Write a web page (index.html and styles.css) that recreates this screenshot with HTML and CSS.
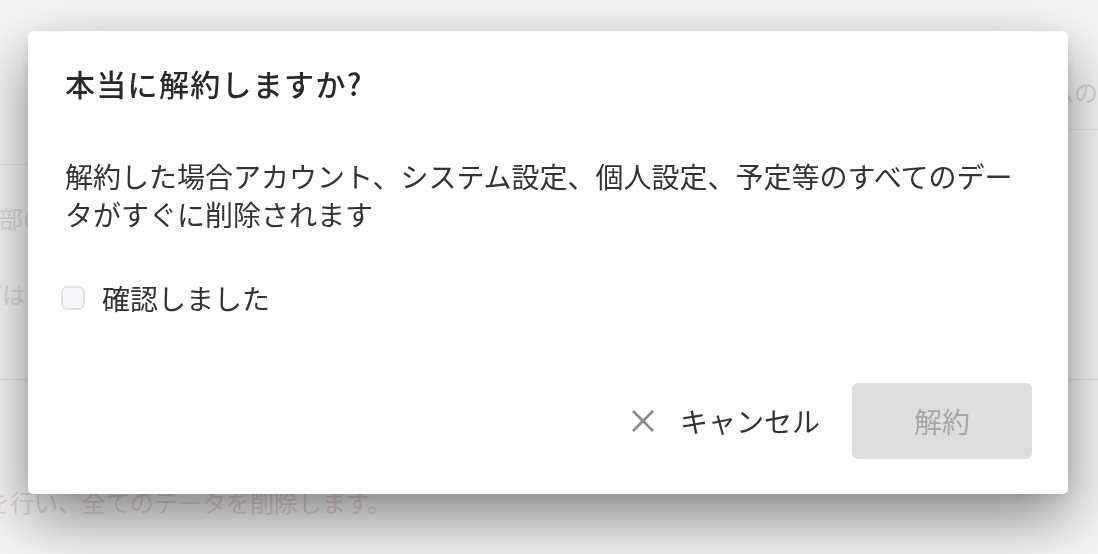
FILE: index.html
```html
<!DOCTYPE html>
<html lang="ja">
<head>
<meta charset="utf-8">
<title>解約</title>
<link rel="stylesheet" href="styles.css">
</head>
<body>
  <div class="bg-page">
    <div class="bg-top">
      <div class="bg-top-right"><span class="bg-text bg-tr">システムの</span></div>
    </div>
    <div class="bg-section">
      <p class="bg-text bg-l1">全部の</p>
      <p class="bg-text bg-l2">ればはい</p>
    </div>
    <div class="bg-danger">
      <p class="bg-text bg-l3">を行い、全てのデータを削除します。</p>
    </div>
  </div>

  <div class="overlay">
    <div class="modal" role="dialog">
      <h2 class="modal-title">本当に解約しますか?</h2>
      <p class="modal-body">解約した場合アカウント、システム設定、個人設定、予定等のすべてのデータがすぐに削除されます</p>
      <label class="check-row">
        <span class="check-box"></span>
        <span class="check-label">確認しました</span>
      </label>
      <div class="modal-footer">
        <button class="btn-cancel" type="button">
          <svg class="icon-x" width="24" height="24" viewBox="0 0 24 24" aria-hidden="true">
            <path d="M2 2 L22 22 M22 2 L2 22" stroke="#8a8a8e" stroke-width="2.6" stroke-linecap="butt" fill="none"/>
          </svg>
          <span>キャンセル</span>
        </button>
        <button class="btn-confirm" type="button" disabled>解約</button>
      </div>
    </div>
  </div>
</body>
</html>
```

FILE: styles.css
```css
html, body {
  margin: 0;
  padding: 0;
  height: 100%;
  overflow: hidden;
}

body {
  background: #f5f5f5;
  font-family: "Noto Sans CJK JP", "Noto Sans", sans-serif;
  color: #333;
}

/* faint page behind the overlay */
.bg-page {
  width: 100%;
  height: 100%;
  overflow: hidden;
}

.bg-text {
  margin: 0;
  font-size: 24px;
  line-height: 34px;
  color: #dcd6d8;
  white-space: nowrap;
}

.bg-top {
  height: 130px;
  display: flex;
  justify-content: flex-end;
  align-items: flex-end;
}

.bg-top-right {
  width: 420px;
  height: 54px;
  border-bottom: 1px solid #e2e2e2;
  display: flex;
  justify-content: flex-end;
  overflow: hidden;
}

.bg-tr {
  margin-right: 0;
  margin-top: 0;
  color: #d6d6d6;
}

.bg-section {
  margin-top: 34px;
  width: 420px;
  border-top: 1px solid #e4e4e4;
  height: 215px;
  padding-top: 36px;
  box-sizing: border-box;
}

.bg-l1 {
  margin-left: -25px;
  color: #dcd8de;
}

.bg-l2 {
  margin-left: -46px;
  margin-top: 42px;
  color: #dcd8de;
}

.bg-danger {
  border-top: 1px solid #ecd9dd;
  padding-top: 105px;
}

.bg-l3 {
  margin-left: -14px;
  color: #e3d3d7;
}

/* overlay + modal */
.overlay {
  position: fixed;
  inset: 0;
  display: flex;
  justify-content: center;
  align-items: flex-start;
  padding: 31px 2px 0 0;
}

.modal {
  width: 1040px;
  box-sizing: border-box;
  background: #fff;
  border-radius: 5px;
  padding: 31px 37px 35px 37px;
  box-shadow: 0 24px 60px rgba(0, 0, 0, 0.45), 0 4px 12px rgba(0, 0, 0, 0.08);
}

.modal-title {
  margin: 0;
  font-size: 30px;
  line-height: 42px;
  font-weight: 500;
  letter-spacing: 1.3px;
  color: #2a2a2a;
}

.modal-body {
  margin: 53px 0 0;
  font-size: 28px;
  line-height: 38px;
  color: #333;
}

.check-row {
  margin-top: 46px;
  display: flex;
  align-items: center;
  gap: 17px;
  margin-left: -4px;
}

.check-box {
  width: 20px;
  height: 20px;
  border: 2px solid #e2e2e8;
  background: #f7f7f9;
  border-radius: 6px;
  flex: none;
}

.check-label {
  font-size: 28px;
  line-height: 38px;
  color: #333;
}

.modal-footer {
  margin-top: 66px;
  display: flex;
  justify-content: flex-end;
  align-items: center;
  gap: 32px;
  margin-right: -1px;
}

.btn-cancel {
  display: flex;
  align-items: center;
  gap: 25px;
  background: none;
  border: none;
  padding: 0;
  font-family: inherit;
  font-size: 28px;
  line-height: 38px;
  color: #333;
}

.icon-x {
  display: block;
  flex: none;
}

.btn-confirm {
  width: 180px;
  height: 76px;
  border: none;
  border-radius: 6px;
  background: #dedede;
  color: #a6a6a6;
  font-family: inherit;
  font-size: 28px;
  padding: 0;
}
```
